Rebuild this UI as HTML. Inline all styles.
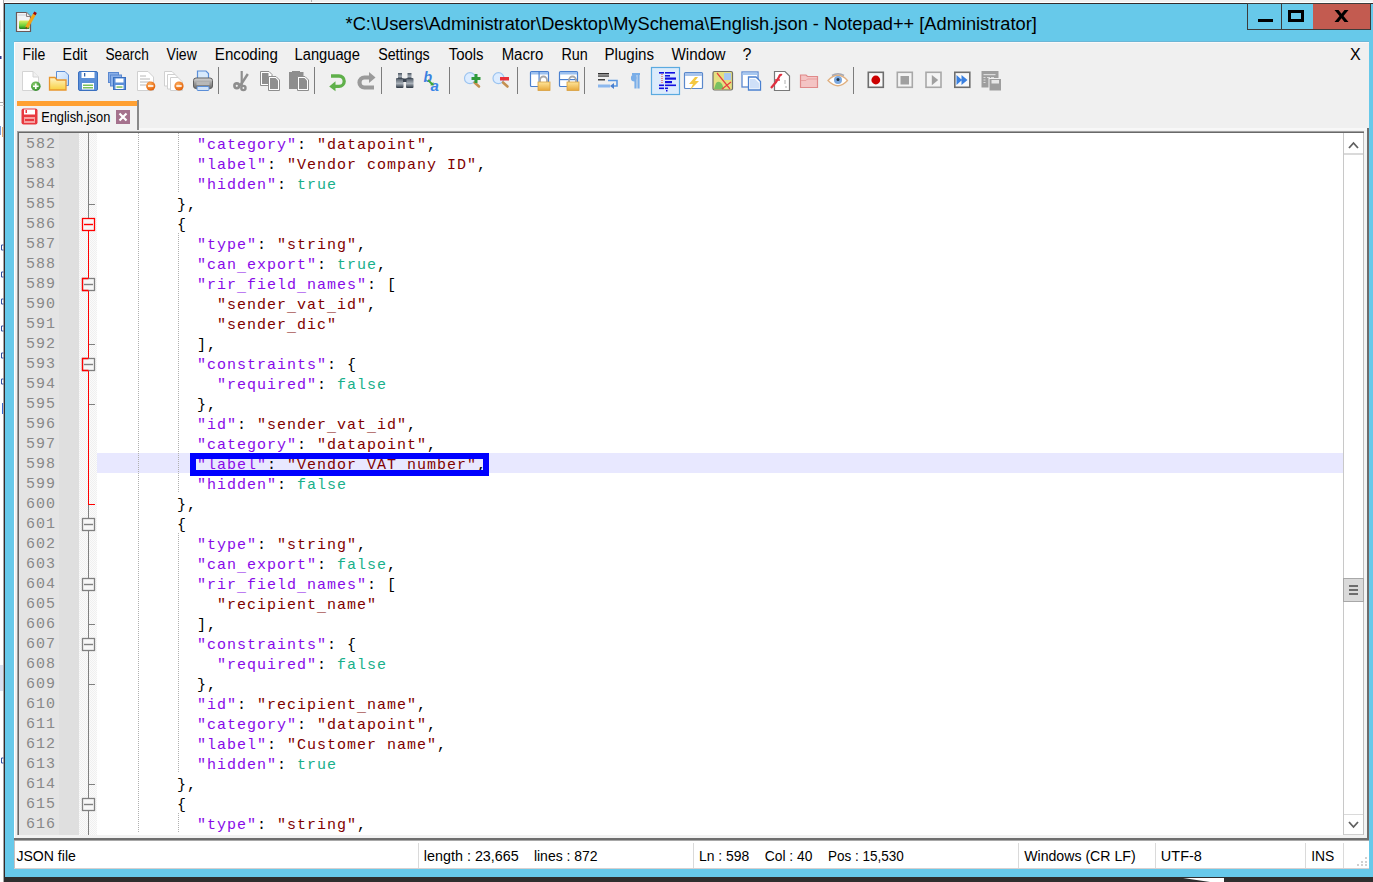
<!DOCTYPE html>
<html><head><meta charset="utf-8">
<style>
*{margin:0;padding:0;box-sizing:border-box}
html,body{width:1373px;height:882px;overflow:hidden;background:#fff}
body{position:relative;font-family:"Liberation Sans",sans-serif}
.a{position:absolute}
.ln{position:absolute;height:20px;line-height:26px;font-family:"Liberation Mono",monospace;font-size:15px;letter-spacing:1px;white-space:pre;color:#000}
.num{position:absolute;left:19px;width:37px;text-align:right;height:20px;line-height:24px;font-family:"Liberation Mono",monospace;font-size:15px;letter-spacing:1px;color:#888888}
.u{position:relative;top:2px}
.k{color:#880AE8}.s{color:#800000}.o{color:#000}.w{color:#18AF8A}
.ig{position:absolute;width:1px;height:20px;background:repeating-linear-gradient(#b0b0b0 0 1px,transparent 1px 2px)}
.menu{position:absolute;top:44px;height:20px;line-height:20px;font-size:15.5px;color:#000}
.sb{position:absolute;top:846px;height:18px;line-height:18px;font-size:15px;color:#000;white-space:pre}
.sep{position:absolute;top:843px;width:1px;height:25px;background:#dadada}
.tsep{position:absolute;top:67px;width:1px;height:27px;background:#8c8c8c}
</style></head><body>
<!-- background strip -->
<div class="a" style="left:4px;top:0;width:1369px;height:2px;background:#f0f0f0"></div>
<div class="a" style="left:3px;top:0;width:1px;height:882px;background:#a8a8a8"></div>
<div class="a" style="left:0;top:102px;width:4px;height:1px;background:#a8a8a8"></div>
<div class="a" style="left:0;top:105px;width:4px;height:1px;background:#d0d0d0"></div>
<div class="a" style="left:0;top:126px;width:1px;height:9px;background:#7a9ad8"></div>
<div class="a" style="left:2px;top:127px;width:1px;height:10px;background:#e8b070"></div>
<svg class="a" style="left:0;top:0" width="4" height="882"><path d="M3.5 245 H1.5 V250 H3.5" fill="none" stroke="#3050a0" stroke-width="1"/><path d="M3.5 272 H1.5 V277 H3.5" fill="none" stroke="#3050a0" stroke-width="1"/><path d="M3.5 299 H1.5 V304 H3.5" fill="none" stroke="#3050a0" stroke-width="1"/><path d="M3.5 326 H1.5 V331 H3.5" fill="none" stroke="#3050a0" stroke-width="1"/><path d="M3.5 353 H1.5 V358 H3.5" fill="none" stroke="#3050a0" stroke-width="1"/><path d="M3.5 379 H1.5 V384 H3.5" fill="none" stroke="#3050a0" stroke-width="1"/><rect x="2" y="403" width="1" height="11" fill="#3a6ad0"/><path d="M3.5 758 H1.5 V763 H3.5" fill="none" stroke="#3050a0" stroke-width="1"/><rect x="0" y="665" width="3" height="26" fill="#d8e0f0"/><rect x="0" y="20" width="1" height="12" fill="#e8e8e8"/><rect x="0" y="56" width="1.5" height="3" fill="#303890"/></svg>
<div class="a" style="left:311px;top:0;width:1px;height:2px;background:#b0b0b0"></div>
<!-- window frame -->
<div class="a" style="left:4px;top:3px;width:1369px;height:879px;background:#332a2a"></div>
<div class="a" style="left:5px;top:4px;width:1368px;height:873px;background:#67c9ea"></div>
<div class="a" style="left:4px;top:877px;width:1369px;height:5px;background:#2e2e2e"></div>
<div class="a" style="left:14px;top:41px;width:1355px;height:1px;background:#6cb6d6"></div>
<!-- title icon -->
<svg class="a" style="left:12px;top:8px" width="30" height="28" viewBox="0 0 30 28">
 <defs><linearGradient id="icg" x1="0" y1="0" x2="0" y2="1"><stop offset="0" stop-color="#e0f060"/><stop offset="0.6" stop-color="#6cd038"/><stop offset="1" stop-color="#1a7a1a"/></linearGradient></defs>
 <path d="M4.5 4.5 H14.5 L18.5 8.5 V23.5 H4.5 Z" fill="#f2f4f6" stroke="#6a5858" stroke-width="1.2"/>
 <path d="M14.5 4.5 V8.5 H18.5" fill="#e8e8e8" stroke="#8a8080" stroke-width="1"/>
 <path d="M7 6 V8 M9 6 V8 M11 6 V8 M13 6 V8" stroke="#c0c8d0" stroke-width="0.8"/>
 <rect x="7" y="12.5" width="10.5" height="8.5" rx="1.2" fill="url(#icg)"/>
 <path d="M14.6 19.6 L22.6 6" stroke="#f0a418" stroke-width="3.2"/>
 <path d="M13.8 21 L14.8 19.2" stroke="#705020" stroke-width="1.5"/>
 <path d="M22.3 6.4 L23.6 4.2" stroke="#a00808" stroke-width="3"/>
</svg>
<!-- caption buttons -->
<div class="a" style="left:1247px;top:3px;width:124px;height:27px;background:#3c3c3c"></div>
<div class="a" style="left:1248px;top:4px;width:33px;height:25px;background:#67c9ea"></div>
<div class="a" style="left:1282px;top:4px;width:31px;height:25px;background:#67c9ea"></div>
<div class="a" style="left:1313px;top:4px;width:57px;height:25px;background:#c35b50"></div>
<div class="a" style="left:1258px;top:19px;width:15px;height:3px;background:#000"></div>
<div class="a" style="left:1288px;top:10px;width:16px;height:12px;border:3px solid #000"></div>
<svg class="a" style="left:1334px;top:10px" width="15" height="12" viewBox="0 0 15 13" preserveAspectRatio="none"><path d="M0.5 0 H4.5 L7.5 4 L10.5 0 H14.5 L9.5 6.5 L14.5 13 H10.5 L7.5 9 L4.5 13 H0.5 L5.5 6.5 Z" fill="#000"/></svg>
<!-- client area -->
<div class="a" style="left:14px;top:42px;width:1355px;height:826px;background:#f0f0f0"></div>
<div class="a" style="left:14px;top:42px;width:1px;height:826px;background:#fff"></div>
<div class="a" style="left:14px;top:42px;width:1355px;height:1px;background:#fbf8f8"></div>
<!-- menu -->
<!-- toolbar -->
<svg class="a" style="left:0;top:0" width="1020" height="100" viewBox="0 0 1020 100">
<defs>
 <linearGradient id="gFold" x1="0" y1="0" x2="0" y2="1"><stop offset="0" stop-color="#fff4c8"/><stop offset="1" stop-color="#f8d040"/></linearGradient>
 <linearGradient id="gBlueP" x1="0" y1="0" x2="1" y2="1"><stop offset="0" stop-color="#eaf4ff"/><stop offset="1" stop-color="#b8d6f8"/></linearGradient>
 <radialGradient id="gGreen" cx="0.4" cy="0.35" r="0.7"><stop offset="0" stop-color="#8fd070"/><stop offset="1" stop-color="#2f8a2a"/></radialGradient>
 <radialGradient id="gOrange" cx="0.4" cy="0.35" r="0.7"><stop offset="0" stop-color="#ffb060"/><stop offset="1" stop-color="#e05a00"/></radialGradient>
 <linearGradient id="gGray" x1="0" y1="0" x2="0" y2="1"><stop offset="0" stop-color="#d8d8d8"/><stop offset="0.5" stop-color="#9a9a9a"/><stop offset="1" stop-color="#6a6a6a"/></linearGradient>
 <linearGradient id="gLock" x1="0" y1="0" x2="0" y2="1"><stop offset="0" stop-color="#ffe69a"/><stop offset="1" stop-color="#e8a83a"/></linearGradient>
 <linearGradient id="gBin" x1="0" y1="0" x2="0" y2="1"><stop offset="0" stop-color="#4a5460"/><stop offset="0.55" stop-color="#a8b0b8"/><stop offset="1" stop-color="#2a3440"/></linearGradient>
</defs>
<!-- New -->
<path d="M22.5 71.5 H33 L38.5 77 V90.5 H22.5 Z" fill="#fff" stroke="#d4d4d4"/>
<path d="M33 71.5 V77 H38.5" fill="#f0f0f0" stroke="#d4d4d4"/>
<circle cx="35.8" cy="86.2" r="4.8" fill="url(#gGreen)"/>
<path d="M33 86.2 H38.6 M35.8 83.4 V89" stroke="#fff" stroke-width="1.6"/>
<!-- Open -->
<path d="M56.5 71.5 H65 L68.5 75 V85.5 H56.5 Z" fill="url(#gBlueP)" stroke="#5a8ed8"/>
<path d="M49.5 77.5 H55 L57 80 H66 V90 H49.5 Z" fill="url(#gFold)" stroke="#e8962e" stroke-width="1.3"/>
<!-- Save -->
<rect x="78.5" y="71.5" width="19" height="19" rx="1.5" fill="#5b8fd8" stroke="#3a70c0"/>
<rect x="81.5" y="72" width="13" height="6" fill="#fff"/>
<rect x="84" y="73" width="1.3" height="3.5" fill="#3060a8"/>
<rect x="82" y="83" width="12" height="6.5" fill="#fff"/>
<rect x="83" y="84.5" width="10" height="1.5" fill="#7cc05a"/>
<rect x="83" y="87" width="10" height="1.5" fill="#7cc05a"/>
<!-- Save all -->
<rect x="108.5" y="72.5" width="10" height="10" fill="#8ab0e8" stroke="#5a88d0"/>
<rect x="110.5" y="75" width="11" height="11" fill="#8ab0e8" stroke="#5a88d0"/>
<rect x="113.5" y="77.5" width="12" height="12" fill="#5b8fd8" stroke="#3a70c0"/>
<rect x="115.5" y="78.5" width="8" height="4" fill="#fff"/>
<rect x="115.5" y="85" width="8" height="4" fill="#fff"/>
<rect x="116.5" y="86.3" width="6" height="1.5" fill="#7cc05a"/>
<!-- Close -->
<path d="M137.5 71.5 H148 L153.5 77 V90.5 H137.5 Z" fill="#fff" stroke="#d0d0d0"/>
<path d="M140 76 H146 M140 79 H150 M140 82 H150 M140 85 H146" stroke="#b8b8b8" stroke-width="1"/>
<circle cx="150.7" cy="86" r="4.6" fill="url(#gOrange)"/>
<path d="M148 86 H153.4" stroke="#fff" stroke-width="1.6"/>
<!-- Close all -->
<path d="M164.5 71.5 H172 L175 74.5 V86 H164.5 Z" fill="#fff" stroke="#d0d0d0"/>
<path d="M167.5 74.5 H175 L178 77.5 V89 H167.5 Z" fill="#fff" stroke="#d0d0d0"/>
<path d="M170.5 77.5 H178 L182.5 82 V90.5 H170.5 Z" fill="#fff" stroke="#d0d0d0"/>
<circle cx="179" cy="86" r="4.6" fill="url(#gOrange)"/>
<path d="M176.3 86 H181.7" stroke="#fff" stroke-width="1.6"/>
<!-- Print -->
<path d="M197.5 71 H206 L208.5 73.5 V80 H197.5 Z" fill="#d8eafc" stroke="#5a8ed8" stroke-width="1.2"/>
<rect x="193.5" y="78" width="19" height="10.5" rx="2.5" fill="url(#gGray)" stroke="#606060"/>
<rect x="196.5" y="82" width="13" height="3" fill="#b8b8b8"/>
<rect x="197" y="86.5" width="12" height="4" rx="1" fill="#cfe2f8" stroke="#5a8ed8"/>
<!-- separators -->
<rect x="218" y="67" width="1" height="27" fill="#7c7c7c"/>
<rect x="314" y="67" width="1" height="27" fill="#7c7c7c"/>
<rect x="381" y="67" width="1" height="27" fill="#7c7c7c"/>
<rect x="449" y="67" width="1" height="27" fill="#7c7c7c"/>
<rect x="517" y="67" width="1" height="27" fill="#7c7c7c"/>
<rect x="584" y="67" width="1" height="27" fill="#7c7c7c"/>
<rect x="853" y="67" width="1" height="27" fill="#7c7c7c"/>
<!-- Cut -->
<g stroke="#8e8e8e" fill="none">
<path d="M241.7 71 V85" stroke-width="2.2"/>
<path d="M247.8 74 L240 86" stroke-width="2.4"/>
<circle cx="236.8" cy="85.8" r="2.4" stroke-width="2.6"/>
<circle cx="243.4" cy="88" r="2.1" stroke-width="2.4"/>
</g>
<!-- Copy -->
<path d="M260.5 71.5 H269 L272 74.5 V85.5 H260.5 Z" fill="#fff" stroke="#8e8e8e"/>
<rect x="262" y="73" width="6.5" height="11" fill="#8e8e8e"/>
<path d="M268.5 76.5 H276 L279.5 80 V90.5 H268.5 Z" fill="#fff" stroke="#8e8e8e"/>
<path d="M270 78 H275.5 L278 80.5 V89 H270 Z" fill="#8e8e8e"/>
<!-- Paste -->
<rect x="289" y="72" width="14.5" height="17" fill="#8e8e8e"/>
<rect x="292" y="71" width="8" height="2" fill="#8e8e8e"/>
<path d="M297.5 76.5 H305 L308.5 80 V90.5 H297.5 Z" fill="#fff" stroke="#8e8e8e"/>
<path d="M299 78 H304.5 L307 80.5 V89 H299 Z" fill="#8e8e8e"/>
<!-- Undo -->
<path d="M331 76 H339 A5.2 5.2 0 0 1 339 86.4 H334" fill="none" stroke="#5fb04a" stroke-width="3.3"/>
<path d="M329.2 86.4 L335.5 81.3 V91.3 Z" fill="#5fb04a"/>
<!-- Redo -->
<path d="M371 77.5 H364.5 A5 5 0 0 0 364.5 87.5 H374" fill="none" stroke="#9a9a9a" stroke-width="4.2"/>
<path d="M375.5 77.5 L369 72 V83 Z" fill="#9a9a9a"/>
<!-- Find -->
<g fill="url(#gBin)">
<rect x="396" y="78" width="7.5" height="10" rx="1"/>
<rect x="406" y="78" width="7.5" height="10" rx="1"/>
<rect x="398" y="73" width="4" height="6"/>
<rect x="407.5" y="73" width="4" height="6"/>
</g>
<rect x="403" y="78.5" width="3.5" height="3.5" fill="#3a4450"/>
<!-- Replace -->
<text x="423.5" y="82" font-family="Liberation Sans" font-style="italic" font-weight="bold" font-size="14" fill="#3a80e0">b</text>
<text x="430.5" y="91" font-family="Liberation Sans" font-style="italic" font-weight="bold" font-size="15" fill="#3a86e8">a</text>
<path d="M428 80 L432.5 84.5" stroke="#40a838" stroke-width="1.8"/><path d="M433.5 85.5 L430 85.3 L433.3 82 Z" fill="#40a838"/>
<!-- Zoom in -->
<circle cx="470" cy="78.2" r="5.5" fill="#dcecff" stroke="#9cc4f0" stroke-width="1.2"/>
<path d="M474.5 82.5 L479 86.5" stroke="#c49050" stroke-width="2.6" stroke-linecap="round"/>
<path d="M471.5 78.5 H480.5 M476 74 V83" stroke="#2f9a3a" stroke-width="3"/>
<!-- Zoom out -->
<circle cx="498.5" cy="78.2" r="5.5" fill="#dcecff" stroke="#9cc4f0" stroke-width="1.2"/>
<path d="M503 82.5 L507.5 86.5" stroke="#c49050" stroke-width="2.6" stroke-linecap="round"/>
<rect x="500" y="77" width="9" height="3.5" fill="#e8303a"/>
<!-- Sync V -->
<rect x="530.5" y="71.5" width="18" height="15" rx="1" fill="#fff" stroke="#4a80d0" stroke-width="1.2"/>
<rect x="531" y="72" width="17" height="2.5" fill="#9cc0ee"/>
<rect x="538.5" y="72" width="1.2" height="14" fill="#4a80d0"/>
<path d="M540 82.5 V80 A3.5 3.5 0 0 1 547 80 V82.5" fill="none" stroke="#a8a8a8" stroke-width="1.8"/>
<rect x="538" y="82" width="12" height="8.5" fill="url(#gLock)" stroke="#d8a040" stroke-width="0.8"/>
<!-- Sync H -->
<rect x="559.5" y="71.5" width="18" height="15" rx="1" fill="#fff" stroke="#4a80d0" stroke-width="1.2"/>
<rect x="560" y="72" width="17" height="2.5" fill="#9cc0ee"/>
<rect x="560" y="79" width="17" height="1.2" fill="#4a80d0"/>
<path d="M569 82.5 V80 A3.5 3.5 0 0 1 576 80 V82.5" fill="none" stroke="#a8a8a8" stroke-width="1.8"/>
<rect x="567" y="82" width="12" height="8.5" fill="url(#gLock)" stroke="#d8a040" stroke-width="0.8"/>
<!-- Word wrap -->
<rect x="598" y="73" width="11" height="1.5" fill="#303030"/>
<rect x="598" y="75.3" width="11" height="1.5" fill="#505050"/>
<rect x="598" y="79" width="7" height="1.5" fill="#404040"/>
<rect x="598" y="84.5" width="12" height="3" fill="#8cb8ee"/>
<path d="M608 80.5 H617 V86 H612" fill="none" stroke="#5a96e0" stroke-width="1.6"/>
<path d="M610 86 L614 83 V89 Z" fill="#4a80d0"/>
<!-- pilcrow -->
<path d="M634.5 75.5 A2.5 2.5 0 0 0 634.5 80.5 M635.5 74 V88.5 M638.5 74 V88.5 M632 74 H640" fill="none" stroke="#7aaee8" stroke-width="2.2"/>
<circle cx="634" cy="78" r="2.5" fill="#7aaee8"/>
<!-- Indent guide (pressed) -->
<rect x="651.5" y="67.5" width="28" height="27" fill="#dcebfb" stroke="#5aaae0" stroke-width="1.2"/>
<g fill="#1010e0">
<rect x="659" y="72" width="5" height="1.6"/><rect x="665" y="72" width="10" height="1.6"/>
<rect x="665" y="75" width="5" height="1.6"/>
<rect x="665" y="77.5" width="11" height="2.2"/>
<rect x="665" y="81" width="7" height="2.2"/>
<rect x="659" y="84.5" width="5" height="1.6"/><rect x="665" y="84.5" width="11" height="1.6"/>
<rect x="659" y="87.5" width="5" height="1.6"/><rect x="665" y="87.5" width="3" height="1.6"/>
<rect x="666" y="90" width="1.5" height="1.5"/>
</g>
<path d="M662 74 V84" stroke="#e03030" stroke-width="1" stroke-dasharray="1 1"/>
<!-- UDL -->
<rect x="684.5" y="72.5" width="18" height="16" rx="1" fill="#fff" stroke="#5a88cc" stroke-width="1.2"/>
<rect x="685" y="73" width="17" height="3" fill="#a8c4ec"/>
<path d="M695 77 L689 84 H693 L690 90 L699 81 H695 L698 77 Z" fill="#f4c840"/>
<!-- Doc map -->
<rect x="713" y="71.5" width="19.5" height="18.5" rx="1.5" fill="#e6e080" stroke="#706f66" stroke-width="1.2"/>
<rect x="724" y="73" width="7" height="7" fill="#a8c8f0"/>
<path d="M716 83 Q719 80 722 84 L724 89 H714 Z" fill="#7ac060"/>
<path d="M717 73 L730 89 M731 82 L722 89" stroke="#e84040" stroke-width="1.2"/>
<!-- Doc list -->
<rect x="742" y="72" width="16" height="15" fill="#fff" stroke="#5a88d0" stroke-width="1.3"/>
<rect x="742.5" y="72.5" width="15" height="2.5" fill="#a8c8f0"/>
<path d="M748.5 77 H756 L760.5 81.5 V90 H748.5 Z" fill="#fff" stroke="#4a80d0" stroke-width="1.3"/>
<path d="M750 79 H755 L759 83 V88.5 H750 Z" fill="#cfe0f8"/>
<!-- Function list -->
<path d="M774.5 71.5 H785 L789.5 76 V90.5 H774.5 Z" fill="#fff" stroke="#787878" stroke-width="1.2"/>
<path d="M771 88 L776 82 L779 77 Q780 74 782 75" fill="none" stroke="#e03040" stroke-width="2.2"/>
<path d="M775 80 H780" stroke="#e03040" stroke-width="1.5"/>
<path d="M785 80 V84 M786 86 V88" stroke="#b0b0b0" stroke-width="1"/>
<!-- Folder as workspace -->
<path d="M800.5 75 H806 L807.5 76.5 H817.5 V87.5 H800.5 Z" fill="#f4c4c4" stroke="#e08a8a" stroke-width="1.2"/>
<path d="M801 80.5 H806 L807.5 79 H817" fill="none" stroke="#e8a0a0" stroke-width="1"/>
<!-- Eye -->
<path d="M828 80.5 Q838 70 847.5 80.5 Q838 91 828 80.5 Z" fill="#fff" stroke="#e0b080" stroke-width="1.3"/>
<circle cx="838" cy="80" r="4" fill="#7aa8e0"/>
<circle cx="838" cy="79.5" r="1.5" fill="#203040"/>
<path d="M832 75.5 Q838 72 844 75.5" fill="none" stroke="#a8a8b0" stroke-width="1.5"/>
<!-- Record -->
<rect x="868.3" y="72.3" width="15" height="15" fill="#f8f8f8" stroke="#6e6e6e" stroke-width="1.6"/>
<circle cx="875.8" cy="80" r="4.4" fill="#cc0000"/>
<!-- Stop -->
<rect x="897.3" y="72.3" width="15" height="15" fill="#f4f4f4" stroke="#a8a8a8" stroke-width="1.6"/>
<rect x="900.5" y="76" width="8.5" height="8.5" fill="#a0a0a0"/>
<!-- Play -->
<rect x="926" y="72.3" width="15" height="15" fill="#f4f4f4" stroke="#a8a8a8" stroke-width="1.6"/>
<path d="M931.8 75 L938.2 80 L931.8 85.3 Z" fill="#a0a0a0"/>
<!-- Play multi -->
<rect x="954.8" y="72.3" width="15" height="15" fill="#f8f8f8" stroke="#6e6e6e" stroke-width="1.6"/>
<path d="M956.5 75 L962 80 L956.5 85 Z M961.5 75 L967.5 80 L961.5 85 Z" fill="#3a80e0"/>
<!-- Save macro -->
<rect x="981.5" y="71" width="17" height="16.5" fill="#9e9e9e"/>
<rect x="983.5" y="74" width="12" height="1.2" fill="#dcdcdc"/>
<path d="M983.5 77.5 h2 M983.5 80 h2 M983.5 82.5 h2 M987 77.5 h3 M991 77.5 h3" stroke="#dcdcdc" stroke-width="1"/>
<rect x="989" y="78.5" width="12.5" height="12.5" fill="#9e9e9e" stroke="#f0f0f0" stroke-width="1"/>
<rect x="991.5" y="80" width="7.5" height="3.5" fill="#e8e8e8"/>
</svg>


<!-- tab -->
<div class="a" style="left:17px;top:101px;width:120px;height:5px;background:#ffa032"></div>
<div class="a" style="left:16px;top:106px;width:121px;height:24px;background:#f2f2f2"></div>
<div class="a" style="left:137px;top:100px;width:2px;height:30px;background:#8a8a8a"></div>
<svg class="a" style="left:21px;top:108px" width="17" height="17" viewBox="0 0 17 17">
 <rect x="0.5" y="0.5" width="16" height="16" rx="2" fill="#e8393f"/>
 <rect x="3" y="1.5" width="11" height="5" fill="#fff"/>
 <rect x="4.5" y="2" width="1.5" height="3" fill="#e8393f"/>
 <rect x="3" y="9" width="11" height="6" fill="#f6a0a0"/>
 <rect x="4" y="11" width="9" height="2" fill="#e8393f"/>
</svg>
<svg class="a" style="left:116px;top:110px" width="14" height="14" viewBox="0 0 14 14"><rect width="14" height="14" fill="#a5728d"/><path d="M3.5 3.5 L10.5 10.5 M10.5 3.5 L3.5 10.5" stroke="#fff" stroke-width="2.2"/></svg>
<!-- editor frame -->
<div class="a" style="left:139px;top:128px;width:1228px;height:2px;background:#f8f8f8"></div>
<div class="a" style="left:17px;top:131px;width:1352px;height:1px;background:#a0a0a0"></div>
<div class="a" style="left:17px;top:131px;width:1px;height:704px;background:#a0a0a0"></div>
<div class="a" style="left:18px;top:132px;width:1349px;height:1px;background:#696969"></div>
<div class="a" style="left:18px;top:132px;width:1px;height:703px;background:#696969"></div>
<div class="a" style="left:19px;top:133px;width:1345px;height:702px;background:#fff"></div>
<div class="a" style="left:1364px;top:131px;width:3px;height:707px;background:#f4f4f4"></div>
<div class="a" style="left:1367px;top:128px;width:2px;height:712px;background:#6e6e6e"></div>
<div class="a" style="left:16px;top:835px;width:1351px;height:3px;background:#f2f2f2"></div>
<div class="a" style="left:14px;top:838px;width:1355px;height:2px;background:#6e6e6e"></div>
<div class="a" style="left:14px;top:840px;width:1355px;height:1px;background:#a8a8a8"></div>
<!-- margins -->
<div class="a" style="left:19px;top:133px;width:40px;height:702px;background:#e4e4e4"></div>
<div class="a" style="left:59px;top:133px;width:20px;height:702px;background:#dfdfdf"></div>
<svg class="a" style="left:79px;top:133px" width="18" height="702"><defs><pattern id="chk" width="2" height="2" patternUnits="userSpaceOnUse"><rect width="2" height="2" fill="#fbfbfb"/><rect width="1" height="1" fill="#f0f0f0"/><rect x="1" y="1" width="1" height="1" fill="#f0f0f0"/></pattern></defs><rect width="18" height="702" fill="url(#chk)"/></svg>
<!-- current line -->
<div class="a" style="left:97px;top:453px;width:1246px;height:20px;background:#e8e8ff"></div>
<div class="ig" style="top:133px;left:138px"></div>
<div class="ig" style="top:133px;left:178px"></div>
<div class="ig" style="top:153px;left:138px"></div>
<div class="ig" style="top:153px;left:178px"></div>
<div class="ig" style="top:173px;left:138px"></div>
<div class="ig" style="top:173px;left:178px"></div>
<div class="ig" style="top:193px;left:138px"></div>
<div class="ig" style="top:213px;left:138px"></div>
<div class="ig" style="top:233px;left:138px"></div>
<div class="ig" style="top:233px;left:178px"></div>
<div class="ig" style="top:253px;left:138px"></div>
<div class="ig" style="top:253px;left:178px"></div>
<div class="ig" style="top:273px;left:138px"></div>
<div class="ig" style="top:273px;left:178px"></div>
<div class="ig" style="top:293px;left:138px"></div>
<div class="ig" style="top:293px;left:178px"></div>
<div class="ig" style="top:313px;left:138px"></div>
<div class="ig" style="top:313px;left:178px"></div>
<div class="ig" style="top:333px;left:138px"></div>
<div class="ig" style="top:333px;left:178px"></div>
<div class="ig" style="top:353px;left:138px"></div>
<div class="ig" style="top:353px;left:178px"></div>
<div class="ig" style="top:373px;left:138px"></div>
<div class="ig" style="top:373px;left:178px"></div>
<div class="ig" style="top:393px;left:138px"></div>
<div class="ig" style="top:393px;left:178px"></div>
<div class="ig" style="top:413px;left:138px"></div>
<div class="ig" style="top:413px;left:178px"></div>
<div class="ig" style="top:433px;left:138px"></div>
<div class="ig" style="top:433px;left:178px"></div>
<div class="ig" style="top:453px;left:138px"></div>
<div class="ig" style="top:453px;left:178px"></div>
<div class="ig" style="top:473px;left:138px"></div>
<div class="ig" style="top:473px;left:178px"></div>
<div class="ig" style="top:493px;left:138px"></div>
<div class="ig" style="top:513px;left:138px"></div>
<div class="ig" style="top:533px;left:138px"></div>
<div class="ig" style="top:533px;left:178px"></div>
<div class="ig" style="top:553px;left:138px"></div>
<div class="ig" style="top:553px;left:178px"></div>
<div class="ig" style="top:573px;left:138px"></div>
<div class="ig" style="top:573px;left:178px"></div>
<div class="ig" style="top:593px;left:138px"></div>
<div class="ig" style="top:593px;left:178px"></div>
<div class="ig" style="top:613px;left:138px"></div>
<div class="ig" style="top:613px;left:178px"></div>
<div class="ig" style="top:633px;left:138px"></div>
<div class="ig" style="top:633px;left:178px"></div>
<div class="ig" style="top:653px;left:138px"></div>
<div class="ig" style="top:653px;left:178px"></div>
<div class="ig" style="top:673px;left:138px"></div>
<div class="ig" style="top:673px;left:178px"></div>
<div class="ig" style="top:693px;left:138px"></div>
<div class="ig" style="top:693px;left:178px"></div>
<div class="ig" style="top:713px;left:138px"></div>
<div class="ig" style="top:713px;left:178px"></div>
<div class="ig" style="top:733px;left:138px"></div>
<div class="ig" style="top:733px;left:178px"></div>
<div class="ig" style="top:753px;left:138px"></div>
<div class="ig" style="top:753px;left:178px"></div>
<div class="ig" style="top:773px;left:138px"></div>
<div class="ig" style="top:793px;left:138px"></div>
<div class="ig" style="top:813px;left:138px"></div>
<div class="ig" style="top:813px;left:178px"></div>
<div class="ln" style="top:133px;left:197px"><span class="k">&quot;category&quot;</span><span class="o">: </span><span class="s">&quot;datapoint&quot;</span><span class="o">,</span></div>
<div class="num" style="top:133px">582</div>
<div class="ln" style="top:153px;left:197px"><span class="k">&quot;label&quot;</span><span class="o">: </span><span class="s">&quot;Vendor company ID&quot;</span><span class="o">,</span></div>
<div class="num" style="top:153px">583</div>
<div class="ln" style="top:173px;left:197px"><span class="k">&quot;hidden&quot;</span><span class="o">: </span><span class="w">true</span></div>
<div class="num" style="top:173px">584</div>
<div class="ln" style="top:193px;left:177px"><span class="o">},</span></div>
<div class="num" style="top:193px">585</div>
<div class="ln" style="top:213px;left:177px"><span class="o">{</span></div>
<div class="num" style="top:213px">586</div>
<div class="ln" style="top:233px;left:197px"><span class="k">&quot;type&quot;</span><span class="o">: </span><span class="s">&quot;string&quot;</span><span class="o">,</span></div>
<div class="num" style="top:233px">587</div>
<div class="ln" style="top:253px;left:197px"><span class="k">&quot;can<span class="u">_</span>export&quot;</span><span class="o">: </span><span class="w">true</span><span class="o">,</span></div>
<div class="num" style="top:253px">588</div>
<div class="ln" style="top:273px;left:197px"><span class="k">&quot;rir<span class="u">_</span>field<span class="u">_</span>names&quot;</span><span class="o">: [</span></div>
<div class="num" style="top:273px">589</div>
<div class="ln" style="top:293px;left:217px"><span class="s">&quot;sender<span class="u">_</span>vat<span class="u">_</span>id&quot;</span><span class="o">,</span></div>
<div class="num" style="top:293px">590</div>
<div class="ln" style="top:313px;left:217px"><span class="s">&quot;sender<span class="u">_</span>dic&quot;</span></div>
<div class="num" style="top:313px">591</div>
<div class="ln" style="top:333px;left:197px"><span class="o">],</span></div>
<div class="num" style="top:333px">592</div>
<div class="ln" style="top:353px;left:197px"><span class="k">&quot;constraints&quot;</span><span class="o">: {</span></div>
<div class="num" style="top:353px">593</div>
<div class="ln" style="top:373px;left:217px"><span class="k">&quot;required&quot;</span><span class="o">: </span><span class="w">false</span></div>
<div class="num" style="top:373px">594</div>
<div class="ln" style="top:393px;left:197px"><span class="o">},</span></div>
<div class="num" style="top:393px">595</div>
<div class="ln" style="top:413px;left:197px"><span class="k">&quot;id&quot;</span><span class="o">: </span><span class="s">&quot;sender<span class="u">_</span>vat<span class="u">_</span>id&quot;</span><span class="o">,</span></div>
<div class="num" style="top:413px">596</div>
<div class="ln" style="top:433px;left:197px"><span class="k">&quot;category&quot;</span><span class="o">: </span><span class="s">&quot;datapoint&quot;</span><span class="o">,</span></div>
<div class="num" style="top:433px">597</div>
<div class="ln" style="top:453px;left:197px"><span class="k">&quot;label&quot;</span><span class="o">: </span><span class="s">&quot;Vendor VAT number&quot;</span><span class="o">,</span></div>
<div class="num" style="top:453px">598</div>
<div class="ln" style="top:473px;left:197px"><span class="k">&quot;hidden&quot;</span><span class="o">: </span><span class="w">false</span></div>
<div class="num" style="top:473px">599</div>
<div class="ln" style="top:493px;left:177px"><span class="o">},</span></div>
<div class="num" style="top:493px">600</div>
<div class="ln" style="top:513px;left:177px"><span class="o">{</span></div>
<div class="num" style="top:513px">601</div>
<div class="ln" style="top:533px;left:197px"><span class="k">&quot;type&quot;</span><span class="o">: </span><span class="s">&quot;string&quot;</span><span class="o">,</span></div>
<div class="num" style="top:533px">602</div>
<div class="ln" style="top:553px;left:197px"><span class="k">&quot;can<span class="u">_</span>export&quot;</span><span class="o">: </span><span class="w">false</span><span class="o">,</span></div>
<div class="num" style="top:553px">603</div>
<div class="ln" style="top:573px;left:197px"><span class="k">&quot;rir<span class="u">_</span>field<span class="u">_</span>names&quot;</span><span class="o">: [</span></div>
<div class="num" style="top:573px">604</div>
<div class="ln" style="top:593px;left:217px"><span class="s">&quot;recipient<span class="u">_</span>name&quot;</span></div>
<div class="num" style="top:593px">605</div>
<div class="ln" style="top:613px;left:197px"><span class="o">],</span></div>
<div class="num" style="top:613px">606</div>
<div class="ln" style="top:633px;left:197px"><span class="k">&quot;constraints&quot;</span><span class="o">: {</span></div>
<div class="num" style="top:633px">607</div>
<div class="ln" style="top:653px;left:217px"><span class="k">&quot;required&quot;</span><span class="o">: </span><span class="w">false</span></div>
<div class="num" style="top:653px">608</div>
<div class="ln" style="top:673px;left:197px"><span class="o">},</span></div>
<div class="num" style="top:673px">609</div>
<div class="ln" style="top:693px;left:197px"><span class="k">&quot;id&quot;</span><span class="o">: </span><span class="s">&quot;recipient<span class="u">_</span>name&quot;</span><span class="o">,</span></div>
<div class="num" style="top:693px">610</div>
<div class="ln" style="top:713px;left:197px"><span class="k">&quot;category&quot;</span><span class="o">: </span><span class="s">&quot;datapoint&quot;</span><span class="o">,</span></div>
<div class="num" style="top:713px">611</div>
<div class="ln" style="top:733px;left:197px"><span class="k">&quot;label&quot;</span><span class="o">: </span><span class="s">&quot;Customer name&quot;</span><span class="o">,</span></div>
<div class="num" style="top:733px">612</div>
<div class="ln" style="top:753px;left:197px"><span class="k">&quot;hidden&quot;</span><span class="o">: </span><span class="w">true</span></div>
<div class="num" style="top:753px">613</div>
<div class="ln" style="top:773px;left:177px"><span class="o">},</span></div>
<div class="num" style="top:773px">614</div>
<div class="ln" style="top:793px;left:177px"><span class="o">{</span></div>
<div class="num" style="top:793px">615</div>
<div class="ln" style="top:813px;left:197px"><span class="k">&quot;type&quot;</span><span class="o">: </span><span class="s">&quot;string&quot;</span><span class="o">,</span></div>
<div class="num" style="top:813px">616</div>
<svg class="a" style="left:0;top:0" width="1373" height="882"><rect x="88" y="133" width="1" height="20" fill="#808080"/><rect x="88" y="153" width="1" height="20" fill="#808080"/><rect x="88" y="173" width="1" height="20" fill="#808080"/><rect x="88" y="193" width="1" height="12" fill="#808080"/><rect x="89" y="204" width="6" height="1" fill="#808080"/><rect x="88" y="205" width="1" height="8" fill="#808080"/><rect x="88" y="213" width="1" height="5" fill="#808080"/><rect x="88" y="231" width="1" height="2" fill="#ff0000"/><rect x="82.5" y="218.5" width="12" height="12" fill="#f6f6f6" stroke="#ff0000" stroke-width="1.3"/><rect x="84" y="223.8" width="9" height="1.4" fill="#ff0000"/><rect x="88" y="233" width="1" height="20" fill="#ff0000"/><rect x="88" y="253" width="1" height="20" fill="#ff0000"/><rect x="88" y="273" width="1" height="5" fill="#ff0000"/><rect x="88" y="291" width="1" height="2" fill="#ff0000"/><rect x="82.5" y="278.5" width="12" height="12" fill="#f6f6f6" stroke="#808080" stroke-width="1.3"/><path d="M88.5 278.5 H82.5 V290.5 H88.5" fill="none" stroke="#ff0000" stroke-width="1.3"/><rect x="84" y="283.8" width="9" height="1.4" fill="#808080"/><rect x="88" y="293" width="1" height="20" fill="#ff0000"/><rect x="88" y="313" width="1" height="20" fill="#ff0000"/><rect x="88" y="333" width="1" height="12" fill="#ff0000"/><rect x="89" y="344" width="6" height="1" fill="#808080"/><rect x="88" y="345" width="1" height="8" fill="#ff0000"/><rect x="88" y="353" width="1" height="5" fill="#ff0000"/><rect x="88" y="371" width="1" height="2" fill="#ff0000"/><rect x="82.5" y="358.5" width="12" height="12" fill="#f6f6f6" stroke="#808080" stroke-width="1.3"/><path d="M88.5 358.5 H82.5 V370.5 H88.5" fill="none" stroke="#ff0000" stroke-width="1.3"/><rect x="84" y="363.8" width="9" height="1.4" fill="#808080"/><rect x="88" y="373" width="1" height="20" fill="#ff0000"/><rect x="88" y="393" width="1" height="12" fill="#ff0000"/><rect x="89" y="404" width="6" height="1" fill="#808080"/><rect x="88" y="405" width="1" height="8" fill="#ff0000"/><rect x="88" y="413" width="1" height="20" fill="#ff0000"/><rect x="88" y="433" width="1" height="20" fill="#ff0000"/><rect x="88" y="453" width="1" height="20" fill="#ff0000"/><rect x="88" y="473" width="1" height="20" fill="#ff0000"/><rect x="88" y="493" width="1" height="12" fill="#ff0000"/><rect x="89" y="504" width="6" height="1" fill="#ff0000"/><rect x="88" y="505" width="1" height="8" fill="#808080"/><rect x="88" y="513" width="1" height="5" fill="#808080"/><rect x="88" y="531" width="1" height="2" fill="#808080"/><rect x="82.5" y="518.5" width="12" height="12" fill="#f6f6f6" stroke="#808080" stroke-width="1.3"/><rect x="84" y="523.8" width="9" height="1.4" fill="#808080"/><rect x="88" y="533" width="1" height="20" fill="#808080"/><rect x="88" y="553" width="1" height="20" fill="#808080"/><rect x="88" y="573" width="1" height="5" fill="#808080"/><rect x="88" y="591" width="1" height="2" fill="#808080"/><rect x="82.5" y="578.5" width="12" height="12" fill="#f6f6f6" stroke="#808080" stroke-width="1.3"/><rect x="84" y="583.8" width="9" height="1.4" fill="#808080"/><rect x="88" y="593" width="1" height="20" fill="#808080"/><rect x="88" y="613" width="1" height="12" fill="#808080"/><rect x="89" y="624" width="6" height="1" fill="#808080"/><rect x="88" y="625" width="1" height="8" fill="#808080"/><rect x="88" y="633" width="1" height="5" fill="#808080"/><rect x="88" y="651" width="1" height="2" fill="#808080"/><rect x="82.5" y="638.5" width="12" height="12" fill="#f6f6f6" stroke="#808080" stroke-width="1.3"/><rect x="84" y="643.8" width="9" height="1.4" fill="#808080"/><rect x="88" y="653" width="1" height="20" fill="#808080"/><rect x="88" y="673" width="1" height="12" fill="#808080"/><rect x="89" y="684" width="6" height="1" fill="#808080"/><rect x="88" y="685" width="1" height="8" fill="#808080"/><rect x="88" y="693" width="1" height="20" fill="#808080"/><rect x="88" y="713" width="1" height="20" fill="#808080"/><rect x="88" y="733" width="1" height="20" fill="#808080"/><rect x="88" y="753" width="1" height="20" fill="#808080"/><rect x="88" y="773" width="1" height="12" fill="#808080"/><rect x="89" y="784" width="6" height="1" fill="#808080"/><rect x="88" y="785" width="1" height="8" fill="#808080"/><rect x="88" y="793" width="1" height="5" fill="#808080"/><rect x="88" y="811" width="1" height="2" fill="#808080"/><rect x="82.5" y="798.5" width="12" height="12" fill="#f6f6f6" stroke="#808080" stroke-width="1.3"/><rect x="84" y="803.8" width="9" height="1.4" fill="#808080"/><rect x="88" y="813" width="1" height="22" fill="#808080"/></svg>
<!-- annotation box -->
<div class="a" style="left:190px;top:453px;width:299px;height:23px;border:6px solid #0000ff"></div>
<!-- scrollbar -->
<div class="a" style="left:1343px;top:133px;width:1px;height:702px;background:#c8c8c8"></div>
<div class="a" style="left:1363px;top:133px;width:1px;height:702px;background:#c0c0c0"></div>
<div class="a" style="left:1344px;top:153px;width:19px;height:2px;background:#dadada"></div>
<div class="a" style="left:1344px;top:814px;width:19px;height:1px;background:#dadada"></div>
<div class="a" style="left:1344px;top:834px;width:19px;height:1px;background:#d0d0d0"></div>
<svg class="a" style="left:1348px;top:141px" width="11" height="8" viewBox="0 0 11 8"><path d="M1 7 L5.5 2 L10 7" fill="none" stroke="#606060" stroke-width="1.8"/></svg>
<svg class="a" style="left:1348px;top:821px" width="11" height="8" viewBox="0 0 11 8"><path d="M1 1 L5.5 6 L10 1" fill="none" stroke="#606060" stroke-width="1.8"/></svg>
<div class="a" style="left:1343px;top:578px;width:21px;height:24px;background:#dadada;border:1px solid #a8a8a8"></div>
<div class="a" style="left:1349px;top:585px;width:9px;height:2px;background:#6e6e6e"></div>
<div class="a" style="left:1349px;top:589px;width:9px;height:2px;background:#6e6e6e"></div>
<div class="a" style="left:1349px;top:593px;width:9px;height:2px;background:#6e6e6e"></div>
<!-- status bar -->
<div class="a" style="left:14px;top:841px;width:1355px;height:27px;background:#fff"></div>
<div class="a" style="left:14px;top:841px;width:1px;height:27px;background:#c8c0c0"></div>
<div class="a" style="left:14px;top:868px;width:1355px;height:1px;background:#d8d0d0"></div>
<svg class="a" style="left:1355px;top:855px" width="13" height="13"><g fill="#d0d0d0"><rect x="10" y="2" width="2" height="2"/><rect x="6" y="6" width="2" height="2"/><rect x="10" y="6" width="2" height="2"/><rect x="2" y="9" width="2" height="2"/><rect x="6" y="9" width="2" height="2"/><rect x="10" y="9" width="2" height="2"/></g></svg>
<div class="sep" style="left:418px"></div>
<div class="sep" style="left:693px"></div>
<div class="sep" style="left:1018px"></div>
<div class="sep" style="left:1155px"></div>
<div class="sep" style="left:1305px"></div>
<div class="sep" style="left:1343px"></div>
<svg class="a" style="left:0;top:0" width="1373" height="882" font-family="Liberation Sans" xml:space="preserve"><text x="345.60" y="30" font-size="18.3" textLength="691.28" lengthAdjust="spacingAndGlyphs" fill="#000">*C:\Users\Administrator\Desktop\MySchema\English.json - Notepad++ [Administrator]</text><text x="22.62" y="60" font-size="16" textLength="22.69" lengthAdjust="spacingAndGlyphs" fill="#000">File</text><text x="62.60" y="60" font-size="16" textLength="24.70" lengthAdjust="spacingAndGlyphs" fill="#000">Edit</text><text x="105.50" y="60" font-size="16" textLength="43.27" lengthAdjust="spacingAndGlyphs" fill="#000">Search</text><text x="166.60" y="60" font-size="16" textLength="30.21" lengthAdjust="spacingAndGlyphs" fill="#000">View</text><text x="214.86" y="60" font-size="16" textLength="62.99" lengthAdjust="spacingAndGlyphs" fill="#000">Encoding</text><text x="294.58" y="60" font-size="16" textLength="65.32" lengthAdjust="spacingAndGlyphs" fill="#000">Language</text><text x="378.20" y="60" font-size="16" textLength="51.50" lengthAdjust="spacingAndGlyphs" fill="#000">Settings</text><text x="448.70" y="60" font-size="16" textLength="34.90" lengthAdjust="spacingAndGlyphs" fill="#000">Tools</text><text x="501.67" y="60" font-size="16" textLength="41.54" lengthAdjust="spacingAndGlyphs" fill="#000">Macro</text><text x="561.40" y="60" font-size="16" textLength="26.41" lengthAdjust="spacingAndGlyphs" fill="#000">Run</text><text x="604.46" y="60" font-size="16" textLength="49.54" lengthAdjust="spacingAndGlyphs" fill="#000">Plugins</text><text x="671.50" y="60" font-size="16" textLength="54.08" lengthAdjust="spacingAndGlyphs" fill="#000">Window</text><text x="742.50" y="60" font-size="16" textLength="8.90" lengthAdjust="spacingAndGlyphs" fill="#000">?</text><text x="1350.00" y="60" font-size="16" textLength="10.67" lengthAdjust="spacingAndGlyphs" fill="#000">X</text><text x="41.15" y="122" font-size="15" textLength="69.15" lengthAdjust="spacingAndGlyphs" fill="#000">English.json</text><text x="16.40" y="861" font-size="15.5" textLength="59.46" lengthAdjust="spacingAndGlyphs" fill="#000">JSON file</text><text x="423.87" y="861" font-size="15.5" textLength="94.90" lengthAdjust="spacingAndGlyphs" fill="#000">length : 23,665</text><text x="533.90" y="861" font-size="15.5" textLength="63.76" lengthAdjust="spacingAndGlyphs" fill="#000">lines : 872</text><text x="698.90" y="861" font-size="15.5" textLength="50.36" lengthAdjust="spacingAndGlyphs" fill="#000">Ln : 598</text><text x="764.70" y="861" font-size="15.5" textLength="47.76" lengthAdjust="spacingAndGlyphs" fill="#000">Col : 40</text><text x="827.93" y="861" font-size="15.5" textLength="75.84" lengthAdjust="spacingAndGlyphs" fill="#000">Pos : 15,530</text><text x="1024.20" y="861" font-size="15.5" textLength="111.45" lengthAdjust="spacingAndGlyphs" fill="#000">Windows (CR LF)</text><text x="1160.87" y="861" font-size="15.5" textLength="41.01" lengthAdjust="spacingAndGlyphs" fill="#000">UTF-8</text><text x="1311.21" y="861" font-size="15.5" textLength="23.10" lengthAdjust="spacingAndGlyphs" fill="#000">INS</text></svg>
<svg class="a" style="left:1180px;top:877px" width="50" height="5"><path d="M3 1 L44 1 V5 L30 5 Z" fill="#fff"/></svg>
</body></html>
